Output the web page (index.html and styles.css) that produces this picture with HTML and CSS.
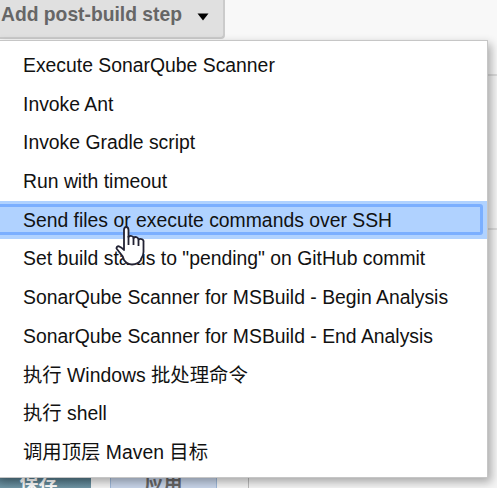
FILE: index.html
```html
<!DOCTYPE html>
<html lang="en">
<head>
<meta charset="utf-8">
<title>Add post-build step</title>
<link rel="stylesheet" href="styles.css">
</head>
<body>
<div class="page">
  <div class="section section-top">
    <button class="step-button"><span>Add post-build step</span><svg class="caret" viewBox="0 0 12 8"><path d="M0.5 0.5H11.5L6 7.5Z"/></svg></button>
  </div>
  <div class="section section-middle"></div>
  <div class="section section-bottom">
    <div class="actions"><button class="save">保存</button><button class="apply">应用</button><span class="divider"></span></div>
  </div>
</div>
<ul class="menu">
  <li><span>Execute SonarQube Scanner</span></li>
  <li><span>Invoke Ant</span></li>
  <li><span>Invoke Gradle script</span></li>
  <li><span>Run with timeout</span></li>
  <li class="selected"><span>Send files or execute commands over SSH</span></li>
  <li><span>Set build status to "pending" on GitHub commit</span></li>
  <li><span>SonarQube Scanner for MSBuild - Begin Analysis</span></li>
  <li><span>SonarQube Scanner for MSBuild - End Analysis</span></li>
  <li><span>执行 Windows 批处理命令</span></li>
  <li><span>执行 shell</span></li>
  <li><span>调用顶层 Maven 目标</span></li>
</ul>
<svg class="cursor" viewBox="0 0 34 42"><path d="M11 5Q11 2 13.2 2T15.5 5V12Q16.5 10.5 18.5 11T20.5 13Q22 11.5 23.7 12.3T25.5 14.5Q27 13.2 29 14.3T30.5 17V27Q30.5 31 28 34V35Q25 39.5 19 39.5Q14 39.5 11 35Q10 31 7 28L3.5 23.5Q3.5 21 6 21.3Q8.5 22 11 25Z"/><path d="M15.5 11V20M20.5 13V20M25.5 14.5V21"/></svg>
</body>
</html>
```
FILE: styles.css
```css
* { box-sizing: border-box; }
body {
  margin: 0;
  width: 497px;
  height: 488px;
  overflow: hidden;
  position: relative;
  background: #f5f5f5;
  font-family: "Liberation Sans", "Noto Sans CJK SC", sans-serif;
}
.page { display: flex; flex-direction: column; height: 488px; }
.section-top { height: 76px; background: #f8f8f8; border-bottom: 2px solid #dcdcdc; }
.section-middle { height: 154px; background: #f5f5f5; border-bottom: 2px solid #dcdcdc; }
.section-bottom { flex: 1; display: flex; align-items: flex-end; overflow: hidden; }
button { font-family: inherit; margin: 0; }
.step-button {
  display: flex;
  align-items: center;
  gap: 15px;
  width: 225px;
  height: 39px;
  padding: 0 0 8px 1px;
  border: 0 solid #cbcbcb;
  border-width: 0 2px 2px 0;
  border-radius: 0 0 4px 0;
  background: #e0e0e0;
  color: #666;
  font-size: 19.3px;
  font-weight: bold;
  white-space: nowrap;
}
.caret { width: 12px; height: 8px; margin-top: 4px; fill: #000; }
.actions { display: flex; height: 14px; width: 100%; }
.save, .apply { font-size: 19px; line-height: 20px; height: 20px; padding: 0; white-space: nowrap; }
.save { width: 91px; padding-right: 14px; background: linear-gradient(#4b7182, #7096a5 14px); color: #fff; border: 0; font-weight: bold; }
.apply { width: 107px; margin-left: 19px; background: #c9d6eb; color: #666; border: 1px solid #9fb9da; border-top: 0; font-weight: bold; }
.divider { width: 1px; margin-left: 31px; background: #bbb; }
.menu {
  position: absolute;
  left: -4px;
  top: 40px;
  width: 492px;
  height: 438px;
  margin: 0;
  padding: 5px 0 0;
  list-style: none;
  background: #fff;
  border: 1px solid #c6c6c6;
  box-shadow: 3px 4px 9px rgba(0, 0, 0, .32);
  color: #111;
  font-size: 19.36px;
}
.menu li {
  height: 38.7px;
  padding: 0 0 0 26px;
  line-height: 39px;
  white-space: nowrap;
}
.menu .selected { position: relative; background: #b0d2ff; }
.menu .selected::after {
  content: "";
  position: absolute;
  inset: 3px 4px 4px -4px;
  border: 3px solid #7bafff;
  border-radius: 3px;
}
.cursor {
  position: absolute;
  left: 113px;
  top: 225px;
  width: 34px;
  height: 42px;
  fill: #fff;
  stroke: #223;
  stroke-width: 1.8;
  stroke-linejoin: round;
}
```
